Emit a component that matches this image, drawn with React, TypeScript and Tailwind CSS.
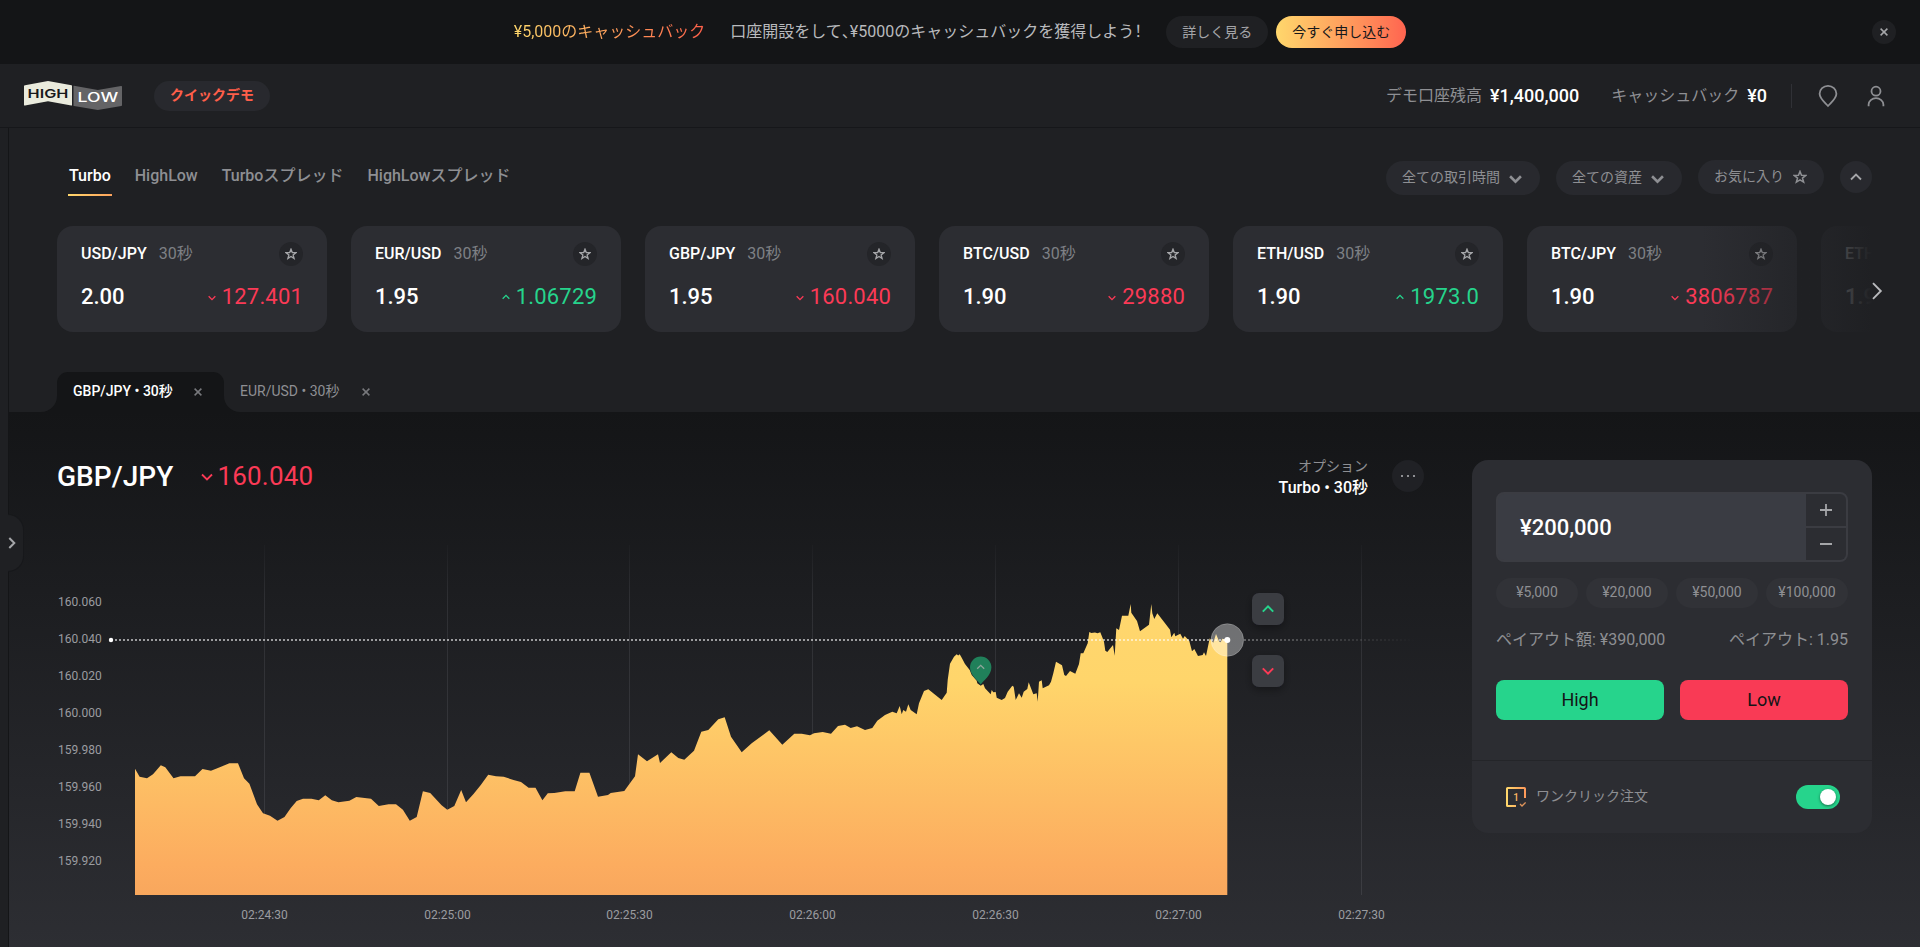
import React from "react";

type Dir = "up" | "down";

const cards: { pair: string; rate: string; price: string; dir: Dir }[] = [
  { pair: "USD/JPY", rate: "2.00", price: "127.401", dir: "down" },
  { pair: "EUR/USD", rate: "1.95", price: "1.06729", dir: "up" },
  { pair: "GBP/JPY", rate: "1.95", price: "160.040", dir: "down" },
  { pair: "BTC/USD", rate: "1.90", price: "29880", dir: "down" },
  { pair: "ETH/USD", rate: "1.90", price: "1973.0", dir: "up" },
  { pair: "BTC/JPY", rate: "1.90", price: "3806787", dir: "down" },
  { pair: "ETH/JPY", rate: "1.90", price: "251330", dir: "down" },
];

const priceLabels = ["160.060", "160.040", "160.020", "160.000", "159.980", "159.960", "159.940", "159.920"];

const timeLabels = [
  { x: 264.5, t: "02:24:30" },
  { x: 447.5, t: "02:25:00" },
  { x: 629.5, t: "02:25:30" },
  { x: 812.5, t: "02:26:00" },
  { x: 995.5, t: "02:26:30" },
  { x: 1178.5, t: "02:27:00" },
  { x: 1361.5, t: "02:27:30" },
];

const line =
  "135,768.7 139.6,776.7 147,778.3 153,774.3 160.8,765.3 165.3,767.3 173.5,778.3 180.5,776.3 195,776.3 202.5,769 211,770.7 220.4,767 229.4,763.3 238,763.3 244,778.3 249.4,783.7 257,804.3 263,813.3 270,815.7 277.5,820.7 284.5,817 290.6,808.3 296.7,801 303,798.7 311.4,798.7 318.8,800.3 325.3,795.3 331.8,800.3 338.4,802.3 349.4,800.7 356.3,797 371,798.7 378.8,806 388.6,804.3 396,804.3 402.9,809.7 409.8,820.7 416.7,817 422.9,791.3 430.2,793 441.6,805.3 447.3,809.7 454.3,806 461.2,790 466,802.3 473.5,794 480.8,785 488.2,774.7 496,776.3 503.7,776.7 513.5,780 521,782 528.6,787.7 535.5,787.7 542.4,800.3 547.8,793.3 554.3,793 565.3,791.3 574.7,791.3 580.4,772.7 589.4,772.7 598,796.7 608,795 610.7,793 624.3,791 635,776.3 638,754.3 647,761.3 658,754.3 660,763 671.3,752.3 678.3,758 684.3,759.7 694,750.7 701.3,731.7 708.3,730 718.3,719.3 724.7,717.3 731,736.7 741.7,752.3 751.7,743.3 769.3,730.3 782.3,744.7 794.3,733.7 801.7,733.7 810,735.3 814,733.3 822.7,732 831,733.7 838,726 845,724.7 850.7,728 857,726.3 865,730 872.3,728 877.3,720.7 885,715 892.3,711.7 896.7,713.3 899.7,706 901.7,714.3 903.3,710 906,711.7 908.3,704.3 910.7,710 916.7,714.3 919,703.3 924,691 928.3,689.3 941.7,700 946.7,692.7 947.7,680 950,663.7 954,656.7 956.7,654.3 958.2,655.5 959.7,654.3 961.7,657.7 965,664 969.7,670 971.7,675 976.7,680.7 977.3,683.3 980.7,685.7 983.3,684 985,688.3 990.7,694.3 991.7,690 993.3,692.3 995.7,692 996.7,697.7 1001.7,700 1005,698 1007.7,691.7 1012.3,685.7 1013.7,686.7 1015.7,700 1019,693.3 1021.7,697.7 1023.7,691.7 1027.3,689 1028.7,682.3 1033.3,694.3 1036.7,693.3 1037.7,701.7 1039,681.7 1041.7,680.3 1042.7,688.3 1049,685.3 1051,681.7 1053.3,673.3 1056,661.7 1062,665.3 1064.3,675 1066,676 1070,671 1075.3,673.7 1079,664 1080.7,653.3 1083.3,653.3 1087.7,643.3 1089.3,632 1091.3,633 1095,632.5 1097.5,633.2 1100.3,632.3 1102.3,637.3 1104,641.7 1105.3,650.7 1107.3,652 1113,645 1114.7,655.7 1116.3,628.3 1119,630 1122,615.7 1128.3,615.7 1130.7,604 1131.3,612.7 1137,621 1140,631.3 1149,624.7 1151.3,604 1152.3,613.3 1154.3,619 1157.3,613.3 1163.3,621 1170,629.7 1171.3,637.3 1174.3,632.7 1175.3,636.3 1180.3,633.7 1183,638.7 1184.7,636 1189.3,641 1192,651.3 1194.3,649 1198,656 1202.7,655 1204,652.3 1206,656 1209.7,638.3 1213.3,642.7 1216,634 1219.3,641.7 1220.7,642.3 1222.3,638.7 1227.3,640";

function Star({ className }: { className?: string }) {
  return (
    <svg viewBox="0 0 12 12" className={className} fill="none" stroke="currentColor" strokeWidth="1.3">
      <path d="M6 1.2 7.3 4.6 10.9 4.7 8.1 6.9 9.1 10.4 6 8.4 2.9 10.4 3.9 6.9 1.1 4.7 4.7 4.6Z" />
    </svg>
  );
}

function Chevron({ dir, className, sw = 1.5 }: { dir: Dir; className?: string; sw?: number }) {
  return (
    <svg viewBox="0 0 12 8" className={className} fill="none" stroke="currentColor" strokeWidth={sw}>
      <path d={dir === "up" ? "M1 6.5 6 1.5 11 6.5" : "M1 1.5 6 6.5 11 1.5"} />
    </svg>
  );
}

function Cross({ className }: { className?: string }) {
  return (
    <svg viewBox="0 0 8 8" className={className} fill="none" stroke="currentColor" strokeWidth="1.5">
      <path d="M.6.6 7.4 7.4M7.4.6.6 7.4" />
    </svg>
  );
}

function Logo() {
  return (
    <svg width="98" height="30" viewBox="24 81 98 30" className="shrink-0">
      <path d="M25 85.3 48 81 71.6 85.3Q72 85.4 72 86V105Q72 105.6 71.3 105.5L48 101.3 25 105.5Q24 105.6 24 105V86.2Q24 85.5 25 85.3Z" fill="#eaebdd" />
      <path d="M73.5 86Q73.5 85.7 74 85.8L97.8 90 121 86Q122 85.9 122 86.6V105Q122 105.8 121.3 106L97.8 110 74 106Q73.5 105.9 73.5 105.4Z" fill="#646466" />
      <text x="27.6" y="97.8" textLength="40.8" lengthAdjust="spacingAndGlyphs" fontFamily="Inter, sans-serif" fontWeight="600" fontSize="12.4" fill="#17181b">HIGH</text>
      <text x="77.6" y="102.3" textLength="40.6" lengthAdjust="spacingAndGlyphs" fontFamily="Inter, sans-serif" fontWeight="500" fontSize="12.4" fill="#fff">LOW</text>
    </svg>
  );
}

function Banner() {
  return (
    <div className="relative flex h-16 shrink-0 items-center justify-center bg-[#141517]">
      <span className="mr-[25px] bg-linear-to-r from-[#ffd76c] to-[#ff5f4a] bg-clip-text text-base leading-6 text-transparent">¥5,000のキャッシュバック</span>
      <span className="mr-6 text-base leading-6 text-[#b9babd]">
        口座開設をして<span className="[font-feature-settings:'halt']">、</span>¥5000のキャッシュバックを獲得しよう<span className="[font-feature-settings:'halt']">！</span>
      </span>
      <button className="mr-2 h-8 rounded-full bg-[#1f2023] px-4 text-sm leading-5 text-[#a5a6a9]">詳しく見る</button>
      <button className="h-8 rounded-full bg-linear-to-r from-[#ffd76c] to-[#ff6450] px-4 text-sm leading-5 text-[#17181b]">今すぐ申し込む</button>
      <button className="absolute top-5 right-6 flex size-6 items-center justify-center rounded-full bg-[#1f2023] text-[#a5a6a9]">
        <Cross className="size-2" />
      </button>
    </div>
  );
}

function Header() {
  return (
    <header className="flex h-16 shrink-0 items-center border-b border-[#16171a] pr-10 pl-6">
      <Logo />
      <button className="ml-8 h-[30px] rounded-full bg-[#28292e] px-4 pb-0.5 text-sm leading-5 font-bold text-[#ff5f4a]">クイックデモ</button>
      <div className="ml-auto flex items-center text-base text-[#8e8f93]">
        <span>デモ口座残高</span>
        <span className="ml-2 text-lg leading-6 font-medium text-white">¥1,400,000</span>
        <span className="ml-8">キャッシュバック</span>
        <span className="ml-2 text-lg leading-6 font-medium text-white">¥0</span>
        <span className="mr-6 ml-6 h-6 w-px bg-[#303136]" />
        <svg width="24" height="24" viewBox="0 0 24 24" fill="none" stroke="#8e8f93" strokeWidth="1.8">
          <path d="M12 22C8.5 18.2 3.6 14.6 3.6 9.8a8.4 8 0 0 1 16.8 0C20.4 14.6 15.5 18.2 12 22Z" />
        </svg>
        <svg width="24" height="24" viewBox="0 0 24 24" fill="none" stroke="#8e8f93" strokeWidth="1.8" className="-mr-2 ml-6">
          <circle cx="12" cy="7.2" r="4.5" />
          <path d="M4.6 22.2V20.6a7.4 6.4 0 0 1 14.8 0V22.2" />
        </svg>
      </div>
    </header>
  );
}

function Filters() {
  return (
    <div className="flex h-[34px] items-start gap-4 text-sm leading-5 text-[#8e8f93]">
      <button className="mt-px flex h-[34px] w-[154px] items-center rounded-full bg-[#28292e] pb-[3px] pl-4">
        全ての取引時間
        <Chevron dir="down" sw={2.4} className="mt-1 ml-[9px] h-2.5 w-[13px]" />
      </button>
      <button className="mt-px flex h-[34px] w-[126px] items-center rounded-full bg-[#28292e] pb-[3px] pl-4">
        全ての資産
        <Chevron dir="down" sw={2.4} className="mt-1 ml-[9px] h-2.5 w-[13px]" />
      </button>
      <button className="flex h-[34px] w-[126px] items-center rounded-full bg-[#28292e] pb-0.5 pl-4">
        お気に入り
        <Star className="mt-0.5 ml-[9px] size-[14px]" />
      </button>
      <button className="mt-px flex size-8 items-center justify-center rounded-full bg-[#28292e] text-[#a5a6a9]">
        <Chevron dir="up" sw={1.8} className="h-2 w-3" />
      </button>
    </div>
  );
}

function Card({ pair, rate, price, dir }: { pair: string; rate: string; price: string; dir: Dir }) {
  return (
    <div className="h-[106px] w-[270px] shrink-0 rounded-2xl bg-[#2c2d32] px-6 pt-4">
      <div className="flex h-6 items-center text-base leading-6">
        <span className="font-medium text-white">{pair}</span>
        <span className="ml-3 text-[#7e8085]">30秒</span>
        <span className="ml-auto flex size-6 items-center justify-center rounded-full bg-[#242529] text-[#a5a6a9]">
          <Star className="size-3" />
        </span>
      </div>
      <div className="mt-[17px] flex h-7 items-center text-[22px] leading-7">
        <span className="font-medium text-white">{rate}</span>
        <span className={dir === "up" ? "ml-auto flex items-center tracking-[0.18px] text-[#26d48c]" : "ml-auto flex items-center tracking-[0.18px] text-[#fb3a56]"}>
          <Chevron dir={dir} sw={2} className={dir === "up" ? "mr-1.5 h-[6px] w-[8px]" : "mt-0.5 mr-1.5 h-[6px] w-[8px]"} />
          {price}
        </span>
      </div>
    </div>
  );
}

function InstrumentTabs() {
  return (
    <div className="flex h-10 items-stretch pl-12 text-sm leading-5 text-[#8e8f93]">
      <div className="relative flex w-[167px] items-center rounded-t-[11px] bg-[#141517] pb-0.5 pl-4 text-white">
        <svg width="16" height="16" viewBox="0 0 16 16" className="absolute bottom-0 -left-4 fill-[#141517]">
          <path d="M16 0A16 16 0 0 1 0 16H16Z" />
        </svg>
        <svg width="16" height="16" viewBox="0 0 16 16" className="absolute -right-4 bottom-0 fill-[#141517]">
          <path d="M0 0A16 16 0 0 0 16 16H0Z" />
        </svg>
        <span className="w-[117px] font-medium">GBP/JPY • 30秒</span>
        <Cross className="mt-0.5 ml-1 size-2 text-[#77787c]" />
      </div>
      <div className="flex items-center pb-0.5 pl-4">
        <span className="w-[118px]">EUR/USD • 30秒</span>
        <Cross className="mt-0.5 ml-1 size-2 text-[#77787c]" />
      </div>
    </div>
  );
}

function Chart() {
  return (
    <svg width="1375" height="395" viewBox="57 540 1375 395" className="block" fontFamily="Roboto, sans-serif" fontSize="12" fill="#9b9ca0">
      <defs>
        <linearGradient id="area" gradientUnits="userSpaceOnUse" x1="0" y1="600" x2="0" y2="895">
          <stop offset="0" stopColor="#ffd76e" />
          <stop offset="0.28" stopColor="#ffd56b" />
          <stop offset="0.9" stopColor="#fcac5f" />
          <stop offset="1" stopColor="#f8a75d" />
        </linearGradient>
        <linearGradient id="grid" gradientUnits="userSpaceOnUse" x1="0" y1="545" x2="0" y2="895">
          <stop offset="0" stopColor="#2c2d31" stopOpacity="0.2" />
          <stop offset="0.15" stopColor="#2e2f33" />
          <stop offset="1" stopColor="#3c3d42" />
        </linearGradient>
        <linearGradient id="fade" gradientUnits="userSpaceOnUse" x1="1244" y1="0" x2="1415" y2="0">
          <stop offset="0" stopColor="#fff" stopOpacity="0.4" />
          <stop offset="1" stopColor="#fff" stopOpacity="0" />
        </linearGradient>
        <filter id="shadow" x="-50%" y="-50%" width="200%" height="200%">
          <feDropShadow dx="0" dy="3" stdDeviation="4" floodColor="#000" floodOpacity="0.35" />
        </filter>
      </defs>
      {timeLabels.map((l) => (
        <rect key={l.t} x={l.x - 0.5} y="545" width="1" height="350" fill="url(#grid)" />
      ))}
      <polygon points={`135,895 ${line} 1227.3,895`} fill="url(#area)" />
      <path d="M111 640H1227" stroke="#fff" strokeOpacity="0.75" strokeWidth="1.4" strokeDasharray="2 2" />
      <path d="M1244 640.01 1415 640" stroke="url(#fade)" strokeWidth="1.4" strokeDasharray="2 2" />
      <circle cx="111" cy="640" r="2.2" fill="#fff" />
      {priceLabels.map((p, i) => (
        <text key={p} x="58" y={606 + i * 37.07}>
          {p}
        </text>
      ))}
      {timeLabels.map((l) => (
        <text key={l.t} x={l.x} y="918.5" textAnchor="middle">
          {l.t}
        </text>
      ))}
      <path d="M980.7 684.5C978 680.5 970 675.5 970 667.3a10.7 10.7 0 0 1 21.4 0C991.4 675.5 983.4 680.5 980.7 684.5Z" fill="#20805a" />
      <path d="M977.2 668.8 980.7 665.3 984.2 668.8" fill="none" stroke="#8fa59b" strokeWidth="1.3" />
      <circle cx="1227.3" cy="640" r="16.3" fill="#fff" fillOpacity="0.37" stroke="#fff" strokeOpacity="0.3" strokeWidth="0.8" />
      <circle cx="1227.3" cy="640" r="3" fill="#fff" />
      <rect x="1252" y="593" width="32" height="32" rx="7" fill="#3b3c43" filter="url(#shadow)" />
      <path d="M1262.8 611.6 1268 606.4 1273.2 611.6" fill="none" stroke="#26d48c" strokeWidth="2" />
      <rect x="1252" y="655" width="32" height="32" rx="7" fill="#3b3c43" filter="url(#shadow)" />
      <path d="M1262.8 668.4 1268 673.6 1273.2 668.4" fill="none" stroke="#fb3a56" strokeWidth="2" />
    </svg>
  );
}

function TradePanel() {
  return (
    <aside className="mt-12 h-[373px] w-[400px] shrink-0 rounded-2xl bg-[#2c2d32]">
      <div className="h-[301px] border-b border-[#242529] px-6 pt-8">
        <div className="flex h-[70px] rounded-lg border-2 border-[#3b3c42] bg-[#3a3c43]">
          <div className="flex flex-1 items-center pt-0.5 pl-[22px] text-[22px] leading-7 font-medium text-white">¥200,000</div>
          <div className="flex w-10 flex-col gap-0.5 overflow-hidden rounded-r-[6px] bg-[#3b3c42]">
            <button className="flex flex-1 items-center justify-center bg-[#2c2d32]">
              <svg width="12" height="12" viewBox="0 0 12 12" stroke="#a5a6a9" strokeWidth="1.8">
                <path d="M6 0V12M0 6H12" />
              </svg>
            </button>
            <button className="flex flex-1 items-center justify-center bg-[#2c2d32]">
              <svg width="12" height="12" viewBox="0 0 12 12" stroke="#a5a6a9" strokeWidth="1.8">
                <path d="M0 6H12" />
              </svg>
            </button>
          </div>
        </div>
        <div className="mt-4 grid grid-cols-4 gap-2 text-sm leading-5 text-[#8e8f93]">
          {["¥5,000", "¥20,000", "¥50,000", "¥100,000"].map((v) => (
            <button key={v} className="h-[30px] rounded-full bg-[#313237] pb-0.5">
              {v}
            </button>
          ))}
        </div>
        <div className="mt-5 flex h-6 items-center justify-between text-base leading-6 text-[#8e8f93]">
          <span>ペイアウト額: ¥390,000</span>
          <span>ペイアウト: 1.95</span>
        </div>
        <div className="mt-7 grid grid-cols-2 gap-4 text-lg leading-6 text-[#141517]">
          <button className="h-10 rounded-lg bg-[#26d48c]">High</button>
          <button className="h-10 rounded-lg bg-[#f93a55]">Low</button>
        </div>
      </div>
      <div className="flex h-[72px] items-center pr-8 pl-[34px]">
        <svg width="20" height="20" viewBox="0 0 20 20" fill="none">
          <defs>
            <linearGradient id="oneClick" x1="0" y1="0" x2="1" y2="0">
              <stop offset="0" stopColor="#ffd76c" />
              <stop offset="1" stopColor="#fd9a5a" />
            </linearGradient>
          </defs>
          <path d="M10 19H1.6Q1 19 1 18.4V1.6Q1 1 1.6 1H18.4Q19 1 19 1.6V11" stroke="url(#oneClick)" strokeWidth="2" />
          <path d="M14 17 16 19 19.6 15.4" stroke="#e0945a" strokeWidth="1.3" />
          <text x="10" y="14" textAnchor="middle" fontSize="10" fontWeight="500" fontFamily="Roboto, sans-serif" fill="#ffb764">1</text>
        </svg>
        <span className="mb-0.5 ml-2.5 text-sm leading-5 text-[#8e8f93]">ワンクリック注文</span>
        <span className="ml-auto flex h-6 w-11 items-center justify-end rounded-full bg-[#26d48c] pr-1">
          <span className="size-4 rounded-full bg-white shadow-[0_1px_3px_rgba(0,0,0,0.5)]" />
        </span>
      </div>
    </aside>
  );
}

export default function App() {
  return (
    <div className="flex h-[947px] w-[1920px] flex-col overflow-hidden bg-[#1f2023] font-[Roboto,'Noto_Sans_CJK_JP',sans-serif]">
      <Banner />
      <Header />
      <div className="flex min-h-0 flex-1">
        <div className="relative w-[9px] shrink-0 border-r border-[#141517]">
          <div className="absolute top-[386px] left-2 z-10 flex h-[58px] w-4 items-center rounded-r-2xl border border-l-0 border-[#17181b] bg-[#1f2023]">
            <svg width="8" height="12" viewBox="0 0 8 12" fill="none" stroke="#a5a6a9" strokeWidth="2">
              <path d="M1.3 1 6.3 6 1.3 11" />
            </svg>
          </div>
        </div>
        <main className="flex min-w-0 flex-1 flex-col">
          <section className="shrink-0">
            <div className="flex h-[98px] items-start pt-8 pr-12 pl-[60px] text-base leading-6 font-medium text-[#8e8f93]">
              <nav className="flex flex-1 gap-6 pt-1">
                <span className="flex h-8 flex-col justify-between text-white">
                  <span>Turbo</span>
                  <span className="-mx-px h-0.5 bg-linear-to-r from-[#ffd76c] to-[#fda35c]" />
                </span>
                <span>HighLow</span>
                <span>Turboスプレッド</span>
                <span>HighLowスプレッド</span>
              </nav>
              <div className="font-normal">
                <Filters />
              </div>
            </div>
            <div className="relative pr-12 pl-12">
              <div className="flex gap-6 overflow-hidden">
                {cards.map((c) => (
                  <Card key={c.pair} {...c} />
                ))}
              </div>
              <div className="absolute top-0 right-12 h-[106px] w-[170px] bg-linear-to-r from-[#1f2023]/0 to-[#1f2023]" />
              <svg width="12" height="18" viewBox="0 0 12 18" fill="none" stroke="#b9babd" strokeWidth="1.9" className="absolute top-14 right-[37px]">
                <path d="M2 1.2 9.8 9 2 16.8" />
              </svg>
            </div>
            <div className="pt-10">
              <InstrumentTabs />
            </div>
          </section>
          <section className="flex min-h-0 flex-1 bg-linear-to-b from-[#141517] to-[#2d2e33] pr-12 pl-12">
            <div className="flex flex-1 flex-col">
              <div className="flex h-32 items-start pt-12 pr-12">
                <h1 className="text-[28px] leading-[33px] font-medium tracking-[0.05px] text-white">GBP/JPY</h1>
                <span className="ml-7 flex items-center text-[26px] leading-[33px] tracking-[0.2px] text-[#fb3a56]">
                  <Chevron dir="down" sw={1.8} className="mr-1 h-2 w-3" />
                  160.040
                </span>
                <div className="-mt-1 ml-auto flex flex-col items-end text-white">
                  <span className="text-sm leading-5 text-[#8e8f93]">オプション</span>
                  <span className="text-base leading-6 font-medium">Turbo • 30秒</span>
                </div>
                <button className="ml-6 flex size-8 items-center justify-center gap-1 rounded-full bg-[#202125]">
                  <span className="size-0.5 bg-[#8e8f93]" />
                  <span className="size-0.5 bg-[#8e8f93]" />
                  <span className="size-0.5 bg-[#8e8f93]" />
                </button>
              </div>
              <Chart />
            </div>
            <TradePanel />
          </section>
        </main>
      </div>
    </div>
  );
}
